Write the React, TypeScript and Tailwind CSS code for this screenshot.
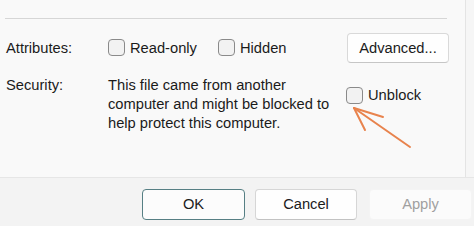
import React from 'react';

function CheckBox({ label }: { label: string }) {
  return (
    <label className="flex items-center gap-[5px]">
      <span className="h-[17px] w-[17px] rounded-[4px] border border-[#8a8a8a] bg-[#f2f2f2]" />
      <span>{label}</span>
    </label>
  );
}

function Arrow() {
  return (
    <svg
      className="absolute left-[340px] top-[100px]"
      width="80"
      height="55"
      viewBox="0 0 80 55"
      fill="none"
      stroke="#e8834d"
      strokeWidth="2"
      strokeLinecap="round"
    >
      <path d="M14 8 L70 47" />
      <path d="M14 8 L43 17" />
      <path d="M14 8 L25 30" />
    </svg>
  );
}

export default function App() {
  return (
    <div
      className="flex h-[226px] w-[474px] flex-col overflow-hidden bg-[#f3f3f3] text-[14.7px] text-[#1b1b1b]"
      style={{ fontFamily: '"Liberation Sans", Arial, sans-serif' }}
    >
      <div className="flex h-[178px] border-b border-[#e6e6e6]">
        <div className="relative w-[466px] border-r border-[#e4e4e4] bg-[#f9f9f9] pt-[18px]">
          <div className="ml-[5px] h-px w-[442px] bg-[#d6d6d6]" />

          <div className="mt-[14px] flex h-[30px] items-center pl-[6px] pr-[16px]">
            <span className="w-[102px]">Attributes:</span>
            <CheckBox label="Read-only" />
            <div className="ml-[21px]">
              <CheckBox label="Hidden" />
            </div>
            <button className="ml-auto h-[30px] w-[102px] rounded-[4px] border border-[#d9d9d9] border-b-[#c6c6c6] bg-[#fefefe]">
              Advanced...
            </button>
          </div>

          <div className="mt-[13px] flex pl-[6px] leading-[19px]">
            <span className="w-[102px]">Security:</span>
            <p className="w-[228px]">
              This file came from another computer and might be blocked to help protect this computer.
            </p>
            <div className="ml-[10px] mt-[10px] self-start">
              <CheckBox label="Unblock" />
            </div>
          </div>

          <Arrow />
        </div>
        <div className="flex-1 bg-[#f6f6f6]" />
      </div>

      <div className="flex pl-[142px] pt-[11px]">
        <button className="h-[31px] w-[103px] rounded-[4px] border border-[#567f84] bg-[#fcfcfc]">
          OK
        </button>
        <button className="ml-[10px] h-[31px] w-[102px] rounded-[4px] border border-[#d6d6d6] border-b-[#c2c2c2] bg-[#fefefe]">
          Cancel
        </button>
        <button className="ml-[12px] h-[31px] w-[103px] rounded-[4px] border border-[#f4f4f4] bg-[#fbfbfb] text-[#a0a0a0]">
          Apply
        </button>
      </div>
    </div>
  );
}
